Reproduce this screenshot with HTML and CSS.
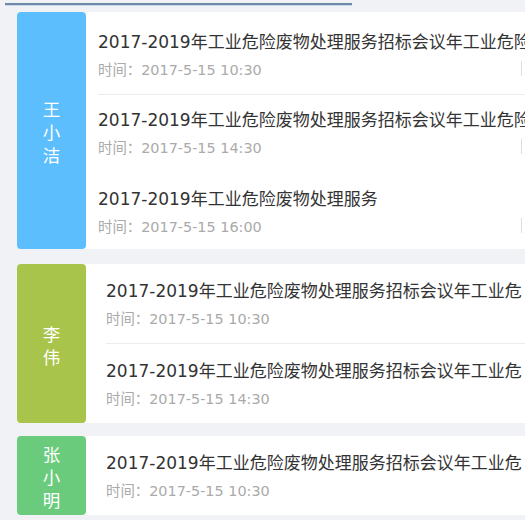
FILE: index.html
```html
<!DOCTYPE html>
<html lang="zh-CN">
<head>
<meta charset="utf-8">
<link rel="stylesheet" href="styles.css">
</head>
<body>
<div class="topbar"></div>
<div class="list">
  <div class="card card-first">
    <div class="name name-blue"><span>王</span><span>小</span><span>洁</span></div>
    <div class="rows">
      <div class="row row-a sep">
        <div class="title">2017-2019年工业危险废物处理服务招标会议年工业危险废物处理服务</div>
        <div class="meta"><span class="time">时间：2017-5-15 10:30</span><span class="vbar"></span></div>
      </div>
      <div class="row row-b">
        <div class="title">2017-2019年工业危险废物处理服务招标会议年工业危险废物处理服务</div>
        <div class="meta"><span class="time">时间：2017-5-15 14:30</span><span class="vbar"></span></div>
      </div>
      <div class="row row-c">
        <div class="title">2017-2019年工业危险废物处理服务</div>
        <div class="meta"><span class="time">时间：2017-5-15 16:00</span><span class="vbar"></span></div>
      </div>
    </div>
  </div>
  <div class="card card-second">
    <div class="name name-olive"><span>李</span><span>伟</span></div>
    <div class="rows rows-wide">
      <div class="row sep">
        <div class="title">2017-2019年工业危险废物处理服务招标会议年工业危</div>
        <div class="meta"><span class="time">时间：2017-5-15 10:30</span></div>
      </div>
      <div class="row">
        <div class="title">2017-2019年工业危险废物处理服务招标会议年工业危</div>
        <div class="meta"><span class="time">时间：2017-5-15 14:30</span></div>
      </div>
    </div>
  </div>
  <div class="card">
    <div class="name name-green"><span>张</span><span>小</span><span>明</span></div>
    <div class="rows rows-wide">
      <div class="row">
        <div class="title">2017-2019年工业危险废物处理服务招标会议年工业危</div>
        <div class="meta"><span class="time">时间：2017-5-15 10:30</span></div>
      </div>
    </div>
  </div>
</div>
</body>
</html>
```
FILE: styles.css
```css
html, body {
  margin: 0;
  padding: 0;
  overflow: hidden;
}
body {
  background: #f0f2f6;
  font-family: "DejaVu Sans", "Noto Sans CJK SC", sans-serif;
  width: 525px;
  height: 520px;
}
.topbar {
  margin: 3px 0 0 5px;
  width: 347px;
  height: 2px;
  background: #6f89a9;
  border-bottom: 1px solid #cbd9ea;
}
.list {
  display: flex;
  flex-direction: column;
  gap: 13px;
  padding: 6px 0 0 17px;
}
.card {
  display: flex;
  width: 640px;
  background: #fff;
  border-radius: 4px 0 0 4px;
}
.card-first {
  margin-bottom: 2px;
}
.name {
  flex: 0 0 69px;
  display: flex;
  flex-direction: column;
  align-items: center;
  justify-content: center;
  padding-top: 2px;
  box-sizing: border-box;
  color: #fff;
  font-family: "Noto Sans CJK SC", sans-serif;
  font-size: 17.5px;
  line-height: 23px;
  border-radius: 4px;
}
.name-blue { background: #5cbefd; }
.name-olive { background: #a9c44b; }
.name-green { background: #6bcb7c; }
.rows {
  flex: 1;
  display: flex;
  flex-direction: column;
  padding-left: 12px;
  min-width: 0;
}
.rows-wide {
  padding-left: 20px;
}
.row {
  padding: 14px 0 13px;
}
.row-a { padding: 17px 0 13px; }
.row-b { padding: 12px 0 13px; }
.row-c { padding: 14px 0 11px; }
.sep {
  border-bottom: 1px solid #ececec;
}
.title {
  font-size: 17px;
  line-height: 26px;
  color: #333;
  white-space: nowrap;
}
.meta {
  display: flex;
  align-items: center;
  height: 26px;
  font-size: 14.4px;
  color: #aaaaaa;
  white-space: nowrap;
}
.time {
  flex: 0 0 423px;
}
.vbar {
  width: 1px;
  height: 15px;
  background: #dedede;
}
```
